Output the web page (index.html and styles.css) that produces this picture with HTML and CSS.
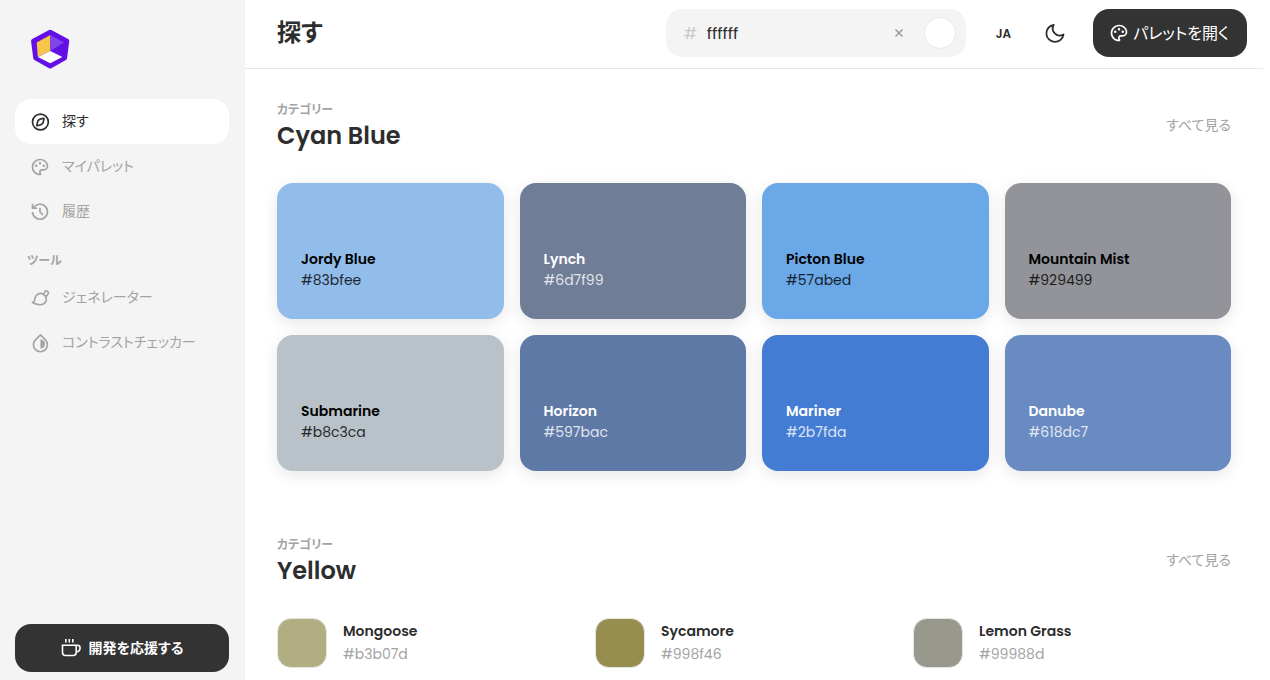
FILE: index.html
```html
<!DOCTYPE html>
<html lang="ja">
<head>
<meta charset="utf-8">
<meta name="viewport" content="width=device-width, initial-scale=1">
<title>探す</title>
<link rel="stylesheet" href="styles.css">
</head>
<body>
<svg class="sprite" aria-hidden="true">
  <symbol id="palette" viewBox="0 0 24 24"><path fill="currentColor" d="M12 2c5.522 0 10 3.978 10 8.889a5.558 5.558 0 0 1-5.556 5.555h-1.966c-.922 0-1.667.745-1.667 1.667 0 .422.167.811.422 1.1.267.3.434.689.434 1.122C13.667 21.256 12.9 22 12 22 6.478 22 2 17.522 2 12S6.478 2 12 2zm-1.189 16.111a3.664 3.664 0 0 1 3.667-3.667h1.966A3.558 3.558 0 0 0 20 10.89C20 7.139 16.468 4 12 4a8 8 0 0 0-.676 15.972 3.648 3.648 0 0 1-.513-1.86zM7.5 12a1.5 1.5 0 1 1 0-3 1.5 1.5 0 0 1 0 3zm9 0a1.5 1.5 0 1 1 0-3 1.5 1.5 0 0 1 0 3zM12 9a1.5 1.5 0 1 1 0-3 1.5 1.5 0 0 1 0 3z"/></symbol>
</svg>
<div class="app">
  <aside class="sidebar">
    <a class="logo" href="#" aria-label="ホーム">
      <svg width="40" height="40" viewBox="0 0 40 40">
        <path d="M20.200 2.900 37 12 34.800 29 20.200 37.200 5.500 29 3.300 12Z" fill="#6210e6" stroke="#6210e6" stroke-width="4.500" stroke-linejoin="round"/>
        <path d="M20.300 6V22L7.800 27.700 6.700 13.500Z" fill="#f7c548"/>
        <path d="M20.300 6 34 13.500 20.300 22Z" fill="#8245ea"/>
        <path d="M20.300 22 32.300 28 20.200 34.300 7.800 28Z" fill="#fff"/>
      </svg>
    </a>
    <nav class="nav">
      <a class="nav-item active" href="#">
        <svg class="icon" viewBox="0 0 24 24" fill="none" stroke="currentColor" stroke-width="2"><circle cx="12.500" cy="12" r="9.500"/><path d="M16.800 7.700C12.500 8 9.500 9 9 12.200L8.200 16.300C12.500 16 15.500 15 16 11.800Z" stroke-linejoin="round"/></svg>
        探す
      </a>
      <a class="nav-item" href="#">
        <svg class="icon"><use href="#palette"/></svg>
        マイパレット
      </a>
      <a class="nav-item" href="#">
        <svg class="icon" viewBox="0 0 24 24" fill="none" stroke="currentColor" stroke-width="2"><path d="M3 2v5.500h5.500M4 7.500A9 9 0 1 1 3 12M12 7v5l3.500 3.500"/></svg>
        履歴
      </a>
      <h2 class="nav-title">ツール</h2>
      <a class="nav-item" href="#">
        <svg class="icon" viewBox="0 0 24 24" fill="none" stroke="currentColor" stroke-width="2" stroke-linejoin="round" stroke-linecap="round"><path d="M3 17.500C7 16.500 4.500 13 7 9.500 9.500 6.500 13 6 16 7.500M19 10.500C20.500 14.500 19 17.500 16 19.300 12 21 7.500 19.800 3 17.500"/><path d="M16 7.500 18.300 4C19.500 2.500 23 4.800 22 6.500L19 10.500Z"/></svg>
        ジェネレーター
      </a>
      <a class="nav-item" href="#">
        <svg class="icon" viewBox="0 0 24 24"><path d="M12.500 2.300 18.500 8.200a8.400 8.400 0 1 1-12 0Z" fill="none" stroke="currentColor" stroke-width="2"/><path d="M12.500 7.800a5.500 5.500 0 0 1 0 11Z" fill="currentColor"/></svg>
        コントラストチェッカー
      </a>
    </nav>
    <button class="button support" type="button">
      <svg class="icon" viewBox="0 0 20 20" fill="none" stroke="currentColor" stroke-width="1.600"><path d="M1.500 7.200h13.700v7.300a3 3 0 0 1-3 3H4.500a3 3 0 0 1-3-3ZM15.200 7.200h1.300a2.500 2.500 0 0 1 2.500 2.500v.8a3.500 3.500 0 0 1-3.500 3.300M4.800 1v3.500M8.300 1v3.500M11.800 1v3.500"/></svg>
      開発を応援する
    </button>
  </aside>

  <div class="page">
    <header class="topbar">
      <h1>探す</h1>
      <div class="search">
        <label for="hex">#</label>
        <input id="hex" type="text" value="ffffff">
        <button class="clear" type="button" aria-label="クリア"><svg width="10" height="10" viewBox="0 0 10 10" fill="none" stroke="currentColor" stroke-width="1.500"><path d="m1.500 1.500 7 7M8.500 1.500l-7 7"/></svg></button>
        <button class="preview" type="button" aria-label="色を選択"></button>
      </div>
      <button class="language" type="button">JA</button>
      <button class="theme" type="button" aria-label="テーマ"><svg width="24" height="24" viewBox="0 0 24 24" fill="none" stroke="currentColor" stroke-width="1.800" stroke-linejoin="round"><path d="M10.800 3.800a7 7 0 0 0 9.700 9.600A8.600 8.600 0 1 1 10.800 3.800Z"/></svg></button>
      <button class="button open" type="button"><svg class="icon"><use href="#palette"/></svg>パレットを開く</button>
    </header>

    <main class="content">
      <section>
        <div class="section-head">
          <div><p>カテゴリー</p><h2>Cyan Blue</h2></div>
          <a href="#">すべて見る</a>
        </div>
        <div class="cards">
          <a class="card jordy dark" href="#"><strong>Jordy Blue</strong><span>#83bfee</span></a>
          <a class="card lynch" href="#"><strong>Lynch</strong><span>#6d7f99</span></a>
          <a class="card picton dark" href="#"><strong>Picton Blue</strong><span>#57abed</span></a>
          <a class="card mist dark" href="#"><strong>Mountain Mist</strong><span>#929499</span></a>
          <a class="card submarine dark" href="#"><strong>Submarine</strong><span>#b8c3ca</span></a>
          <a class="card horizon" href="#"><strong>Horizon</strong><span>#597bac</span></a>
          <a class="card mariner" href="#"><strong>Mariner</strong><span>#2b7fda</span></a>
          <a class="card danube" href="#"><strong>Danube</strong><span>#618dc7</span></a>
        </div>
      </section>
      <section>
        <div class="section-head">
          <div><p>カテゴリー</p><h2>Yellow</h2></div>
          <a href="#">すべて見る</a>
        </div>
        <div class="swatches">
          <a class="swatch" href="#"><i class="mongoose"></i><div><strong>Mongoose</strong><span>#b3b07d</span></div></a>
          <a class="swatch" href="#"><i class="sycamore"></i><div><strong>Sycamore</strong><span>#998f46</span></div></a>
          <a class="swatch" href="#"><i class="lemon"></i><div><strong>Lemon Grass</strong><span>#99988d</span></div></a>
        </div>
      </section>
    </main>
  </div>
</div>
</body>
</html>
```
FILE: styles.css
```css
* { box-sizing: border-box; }
body {
  margin: 0;
  background: #fff;
  color: #2d2d2d;
  font-family: Poppins, Inter, "Noto Sans CJK JP", sans-serif;
  font-size: 14px;
  line-height: 21px;
  font-feature-settings: "palt";
}
h1, h2, p { margin: 0; }
a { color: inherit; text-decoration: none; }
button, input { font: inherit; font-feature-settings: inherit; color: inherit; border: 0; background: none; padding: 0; }
button { cursor: pointer; }
svg { display: block; flex: none; }
.sprite { display: none; }
.icon { width: 20px; height: 20px; }

.app { display: grid; grid-template-columns: 245px minmax(0, 1fr); height: 100vh; overflow: hidden; }
.sidebar { display: flex; flex-direction: column; padding: 29px 16px 8px 15px; background: #f4f4f4; }
.logo { align-self: flex-start; margin: 0 0 30px 15px; }
.nav { flex: 1; color: #a3a3a3; }
.nav-item { display: flex; align-items: center; gap: 12px; height: 45px; padding: 0 15px; border-radius: 16px; }
.nav-item.active { background: #fff; color: #2d2d2d; }
.nav-title { padding: 16px 12px 4px; font-size: 12px; line-height: 21px; font-weight: 600; }

.button { display: flex; align-items: center; justify-content: center; height: 48px; border-radius: 16px; background: #333; color: #fff; }
.support { gap: 8px; font-weight: 600; }

.page { overflow: hidden; padding-right: 7px; }
.topbar { display: flex; align-items: center; height: 69px; padding: 0 16px 2px 32px; border-bottom: 1px solid #e8e8e8; }
.topbar h1 { flex: 1; font-size: 24px; line-height: 36px; font-weight: 600; }
.search { display: flex; align-items: center; width: 300px; height: 48px; padding: 0 10px 0 18px; border-radius: 16px; background: #f4f4f4; }
.search label { width: 23px; color: #c8c8c8; font-size: 16px; }
.search input { flex: 1; min-width: 0; outline: 0; font-size: 16px; }
.clear { margin-right: 20px; color: #999; }
.preview { width: 32px; height: 32px; border: 1px solid #eaeaea; border-radius: 50%; background: #fff; }
.language { margin: 0 32px 0 30px; font-size: 12px; font-weight: 600; }
.theme { margin-right: 26px; }
.open { gap: 4px; padding: 0 18px 0 16px; font-size: 16px; }

.content { display: grid; gap: 62px; padding: 29px 32px; }
.section-head { display: flex; align-items: center; justify-content: space-between; margin-bottom: 31px; }
.section-head p { padding-top: 3px; color: #a3a3a3; font-size: 12px; line-height: 18px; font-weight: 600; }
.section-head h2 { font-size: 24px; line-height: 33px; font-weight: 600; }
.section-head a { color: #a3a3a3; }

.cards { display: grid; grid-template-columns: repeat(4, 1fr); gap: 16px; }
.card { display: flex; flex-direction: column; justify-content: flex-end; min-height: 136px; padding: 24px 24px 28px; border-radius: 16px; color: #fff; box-shadow: 0 4px 16px rgba(0, 0, 0, .1); }
.card.dark { color: #000; }
.card strong, .swatch strong { font-weight: 600; }
.card span { opacity: .8; }
.jordy { background: #92bcea; }
.lynch { background: #6f7d97; }
.picton { background: #6ba8e7; }
.mist { background: #929499; }
.submarine { background: #b9c2c9; }
.horizon { background: #5e79a6; }
.mariner { background: #447cd4; }
.danube { background: #6a8bc1; }

.swatches { display: grid; grid-template-columns: repeat(3, 1fr); }
.swatch { display: flex; align-items: center; gap: 16px; }
.swatch i { width: 50px; height: 50px; border: 1px solid #e4e4e4; border-radius: 14px; }
.swatch div { display: grid; gap: 2px; }
.swatch span { color: #a3a3a3; }
.mongoose { background: #b1ae81; }
.sycamore { background: #958e4e; }
.lemon { background: #98988d; }
```
